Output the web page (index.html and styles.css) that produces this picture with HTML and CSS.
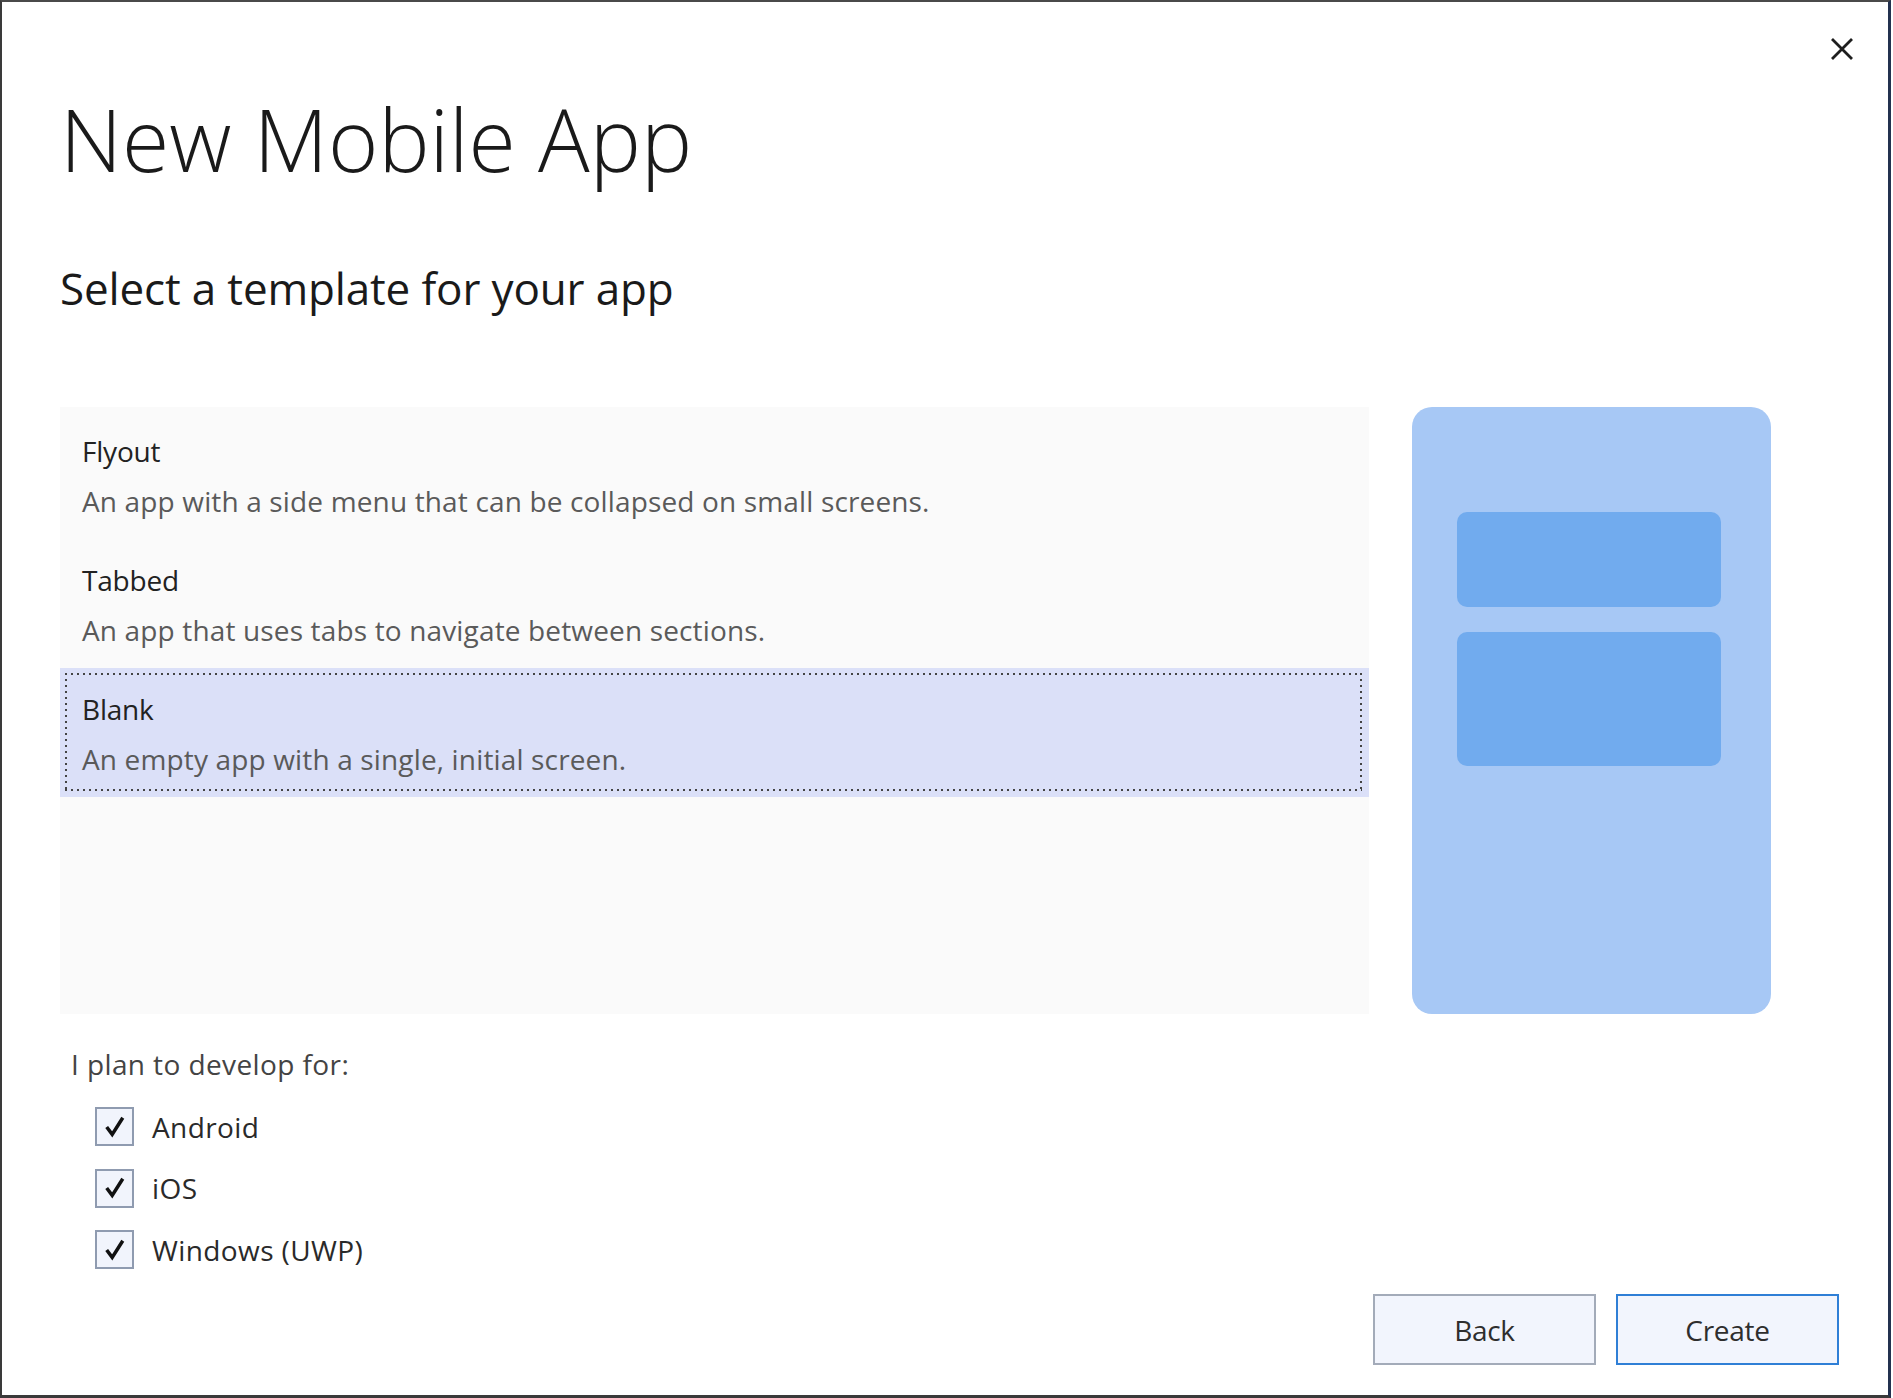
FILE: index.html
```html
<!DOCTYPE html>
<html lang="en">
<head>
<meta charset="utf-8">
<title>New Mobile App</title>
<link rel="stylesheet" href="styles.css">
</head>
<body>
<div class="dialog">
  <button class="close" aria-label="Close">
    <svg width="24" height="24" viewBox="0 0 24 24"><path d="M2 2 L22 22 M22 2 L2 22" stroke="#1e1e1e" stroke-width="2.8" fill="none"/></svg>
  </button>
  <h1 class="title">New Mobile App</h1>
  <h2 class="subtitle">Select a template for your app</h2>
  <div class="main">
    <div class="list">
      <div class="row">
        <div class="row-title">Flyout</div>
        <div class="row-desc">An app with a side menu that can be collapsed on small screens.</div>
      </div>
      <div class="row">
        <div class="row-title">Tabbed</div>
        <div class="row-desc">An app that uses tabs to navigate between sections.</div>
      </div>
      <div class="row selected">
        <div class="row-title">Blank</div>
        <div class="row-desc">An empty app with a single, initial screen.</div>
      </div>
    </div>
    <div class="preview">
      <div class="block block-a"></div>
      <div class="block block-b"></div>
    </div>
  </div>
  <div class="plan">I plan to develop for:</div>
  <div class="checks">
    <label class="check"><span class="box"><svg width="38" height="38" viewBox="0 0 38 38"><path d="M10.5 19 L16.5 27 L28 9" stroke="#111" stroke-width="3.8" fill="none" stroke-linejoin="miter"/></svg></span><span class="check-label">Android</span></label>
    <label class="check"><span class="box"><svg width="38" height="38" viewBox="0 0 38 38"><path d="M10.5 19 L16.5 27 L28 9" stroke="#111" stroke-width="3.8" fill="none" stroke-linejoin="miter"/></svg></span><span class="check-label">iOS</span></label>
    <label class="check"><span class="box"><svg width="38" height="38" viewBox="0 0 38 38"><path d="M10.5 19 L16.5 27 L28 9" stroke="#111" stroke-width="3.8" fill="none" stroke-linejoin="miter"/></svg></span><span class="check-label">Windows (UWP)</span></label>
  </div>
  <div class="buttons">
    <button class="btn">Back</button>
    <button class="btn primary">Create</button>
  </div>
</div>
</body>
</html>
```
FILE: styles.css
```css
html, body {
  margin: 0;
  padding: 0;
  background: #ffffff;
}
body {
  font-family: "Open Sans", "Noto Sans", "Liberation Sans", sans-serif;
  color: #1e1e1e;
}
.dialog {
  position: relative;
  box-sizing: border-box;
  width: 1891px;
  height: 1398px;
  border-top: 2px solid #4a4a4a;
  border-left: 2px solid #3a3a3a;
  border-right: 3px solid #23314f;
  border-bottom: 3px solid #3a3a3a;
  padding: 0 0 0 58px;
  background: #ffffff;
}
.close {
  position: absolute;
  top: 35px;
  right: 34px;
  width: 24px;
  height: 24px;
  padding: 0;
  border: 0;
  background: transparent;
  display: flex;
}
.title {
  margin: 87px 0 0 0;
  font-size: 86px;
  font-weight: 350;
  line-height: 100px;
  letter-spacing: 0;
  color: #1a1a1a;
}
.subtitle {
  margin: 71px 0 0 0;
  font-size: 44px;
  font-weight: 400;
  line-height: 56px;
  letter-spacing: -0.15px;
  color: #1a1a1a;
}
.main {
  margin-top: 91px;
  display: flex;
  gap: 43px;
  height: 607px;
}
.list {
  width: 1309px;
  box-sizing: border-box;
  background: #fafafa;
  padding-top: 3px;
  display: flex;
  flex-direction: column;
}
.row {
  position: relative;
  height: 129px;
  box-sizing: border-box;
  padding: 23px 0 0 22px;
}
.row-title {
  font-size: 28px;
  line-height: 36px;
  color: #222222;
  letter-spacing: -0.2px;
}
.row-desc {
  margin-top: 14px;
  font-size: 28px;
  line-height: 36px;
  color: #5a5a5a;
  letter-spacing: 0.15px;
}
.selected {
  background: #dbe0f8;
}
.selected::after {
  content: "";
  position: absolute;
  top: 5px;
  left: 5px;
  right: 7px;
  bottom: 6px;
  background:
    repeating-linear-gradient(90deg, #444 0 2px, transparent 2px 6px) top left / 100% 2px no-repeat,
    repeating-linear-gradient(90deg, #444 0 2px, transparent 2px 6px) bottom left / 100% 2px no-repeat,
    repeating-linear-gradient(180deg, #444 0 2px, transparent 2px 6px) top left / 2px 100% no-repeat,
    repeating-linear-gradient(180deg, #444 0 2px, transparent 2px 6px) top right / 2px 100% no-repeat;
}
.preview {
  width: 359px;
  box-sizing: border-box;
  background: #a7c8f5;
  border-radius: 20px;
  padding: 105px 50px 0 45px;
  display: flex;
  flex-direction: column;
  gap: 25px;
}
.block {
  background: #71abee;
  border-radius: 10px;
}
.block-a {
  height: 95px;
}
.block-b {
  height: 134px;
}
.plan {
  margin: 32px 0 0 11px;
  font-size: 28px;
  line-height: 36px;
  color: #444444;
  letter-spacing: 0.4px;
}
.checks {
  margin: 25px 0 0 35px;
  display: flex;
  flex-direction: column;
  gap: 22.5px;
}
.check {
  display: flex;
  align-items: center;
  gap: 18px;
  height: 39px;
}
.box {
  box-sizing: border-box;
  width: 39px;
  height: 39px;
  border: 2px solid #8f9bb0;
  background: #f1f4fc;
  display: flex;
  align-items: center;
  justify-content: center;
}
.box svg {
  display: block;
}
.check-label {
  font-size: 28px;
  line-height: 36px;
  color: #2a2a2a;
  letter-spacing: 0.4px;
}
.buttons {
  margin: 25px 49px 0 0;
  display: flex;
  justify-content: flex-end;
  gap: 20px;
}
.btn {
  box-sizing: border-box;
  width: 223px;
  height: 71px;
  border: 2px solid #a3abb9;
  background: #f2f5fd;
  font-family: "Open Sans", "Noto Sans", "Liberation Sans", sans-serif;
  font-size: 28px;
  color: #2e2e2e;
  padding: 0;
  letter-spacing: -0.3px;
}
.primary {
  border-color: #2f7fd6;
}
```
